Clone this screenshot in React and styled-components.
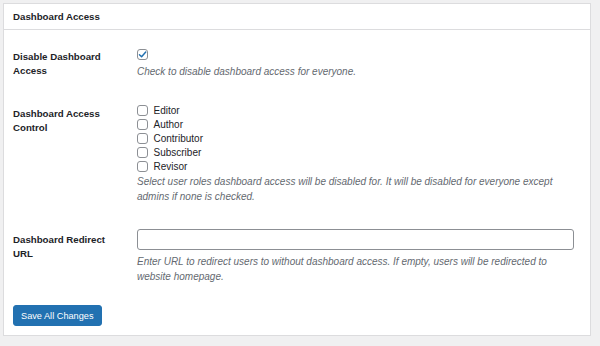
import React from "react";
import styled, { createGlobalStyle } from "styled-components";

const GlobalStyle = createGlobalStyle`
    body {
        margin: 0;
        background: #f0f0f1;
        font-family: "Liberation Sans", Arial, sans-serif;
        color: #1d2327;
    }
`;

const roles = ["Editor", "Author", "Contributor", "Subscriber", "Revisor"];

const Checkbox = ({ checked, children }) => (
    <CheckItem>
        <Box>
            {checked && (
                <svg width="9" height="9" viewBox="0 0 10 10">
                    <path d="M1.6 5.2 L4 7.6 L8.6 2.2" fill="none" stroke="#2271b1" strokeWidth="1.6" strokeLinecap="round" strokeLinejoin="round" />
                </svg>
            )}
        </Box>
        {children}
    </CheckItem>
);

const App = () => {
    return (
        <>
            <GlobalStyle />
            <Panel>
                <Header>Dashboard Access</Header>
                <Body>
                    <Row>
                        <Label $offset={2.5}>Disable Dashboard Access</Label>
                        <Field>
                            <Checkbox checked />
                            <Description $top={2}>Check to disable dashboard access for everyone.</Description>
                        </Field>
                    </Row>
                    <Row>
                        <Label $offset={3.5}>Dashboard Access Control</Label>
                        <Field>
                            {roles.map((role) => (
                                <Checkbox key={role}>{role}</Checkbox>
                            ))}
                            <Description $top={0}>
                                Select user roles dashboard access will be disabled for. It will be disabled for everyone except admins if none is checked.
                            </Description>
                        </Field>
                    </Row>
                    <Row>
                        <Label $offset={4}>Dashboard Redirect URL</Label>
                        <Field>
                            <TextInput type="text" />
                            <Description $top={4}>
                                Enter URL to redirect users to without dashboard access. If empty, users will be redirected to website homepage.
                            </Description>
                        </Field>
                    </Row>
                    <SaveButton>Save All Changes</SaveButton>
                </Body>
            </Panel>
        </>
    );
};

const Panel = styled.div`
    margin: 3px 0 0 3px;
    width: 588px;
    box-sizing: border-box;
    border: 1px solid #dcdcde;
    background: #fff;
    padding-bottom: 9px;
`;

const Header = styled.div`
    height: 26px;
    box-sizing: border-box;
    border-bottom: 1px solid #dcdcde;
    display: flex;
    align-items: center;
    padding: 0 9px;
    font-size: 9.7px;
    font-weight: 700;
`;

const Body = styled.div`
    padding: 5px 9px 0;
`;

const Row = styled.div`
    display: grid;
    grid-template-columns: 124px 437px;
    align-items: start;
    padding: 12.5px 0;
`;

const Label = styled.div`
    padding-top: ${(p) => p.$offset}px;
    padding-right: 10px;
    font-size: 9.7px;
    font-weight: 700;
    line-height: 14px;
`;

const Field = styled.div`
    display: flex;
    flex-direction: column;
    align-items: flex-start;
`;

const CheckItem = styled.label`
    display: flex;
    align-items: center;
    gap: 5.5px;
    height: 14px;
    font-size: 10px;
`;

const Box = styled.span`
    width: 11px;
    height: 11px;
    box-sizing: border-box;
    border: 1px solid #8c8f94;
    border-radius: 3px;
    background: #fff;
    display: flex;
    align-items: center;
    justify-content: center;
`;

const Description = styled.p`
    margin: ${(p) => p.$top}px 0 0;
    font-size: 10px;
    font-style: italic;
    line-height: 15px;
    color: #646970;
`;

const TextInput = styled.input`
    width: 437px;
    height: 21px;
    box-sizing: border-box;
    margin: 0;
    border: 1px solid #8c8f94;
    border-radius: 3px;
    background: #fff;
    padding: 0 6px;
    font-family: inherit;
`;

const SaveButton = styled.button`
    margin-top: 9px;
    height: 21px;
    padding: 0 7px;
    border: 1px solid #2271b1;
    border-radius: 3px;
    background: #2271b1;
    color: #fff;
    font-family: "Liberation Sans", Arial, sans-serif;
    font-size: 9.2px;
    cursor: pointer;
`;

export default App;
